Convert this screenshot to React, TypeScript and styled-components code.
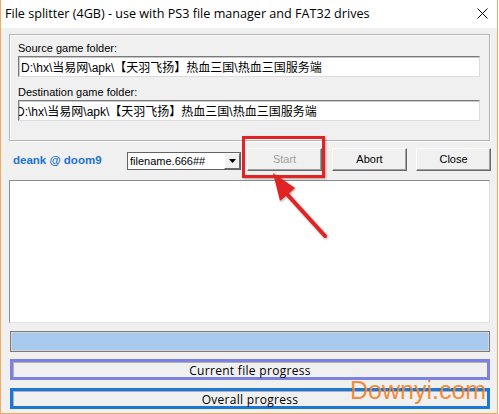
import React from "react";
import styled, { createGlobalStyle } from "styled-components";

const Global = createGlobalStyle`
  html, body { margin: 0; padding: 0; background: #ffffff; }
  body { width: 499px; height: 414px; overflow: hidden; }
`;

const Window = styled.div`
  position: relative;
  box-sizing: border-box;
  width: 498px;
  height: 414px;
  background: #f0f0f0;
  border-left: 1px solid #eeac5c;
  border-right: 1px solid #eeac5c;
  border-bottom: 1px solid #eeac5c;
  display: flex;
  flex-direction: column;
  font-family: "Liberation Sans", Arial, sans-serif;
  font-size: 11px;
  color: #000;
`;

const TitleBar = styled.div`
  height: 27px;
  background: #ffffff;
  display: flex;
  align-items: center;
  justify-content: space-between;
  padding: 0 9px 1px 4px;
  flex-shrink: 0;
`;

const TitleText = styled.span`
  font-family: "Open Sans", "Noto Sans", sans-serif;
  font-size: 12.6px;
  letter-spacing: 0px;
  color: #000;
`;

const Body = styled.div`
  display: flex;
  flex-direction: column;
  padding: 6px 7px 0 8px;
`;

const Group = styled.div`
  box-sizing: border-box;
  height: 107px;
  border: 1px solid #b4b4b4;
  box-shadow: inset 1px 1px 0 #ffffff, 1px 1px 0 #ffffff;
  padding: 6px 9px 0 8px;
  display: flex;
  flex-direction: column;
`;

const Label = styled.div<{ $gap?: number }>`
  height: 14px;
  line-height: 14px;
  margin-top: ${(p) => p.$gap ?? 0}px;
  margin-bottom: 1px;
  font-size: 11px;
`;

const TextField = styled.div`
  box-sizing: border-box;
  height: 21px;
  background: #ffffff;
  border-top: 1px solid #7a7a7a;
  border-left: 1px solid #7a7a7a;
  border-right: 1px solid #dcdcdc;
  border-bottom: 1px solid #dcdcdc;
  box-shadow: inset 1px 1px 0 #c8c8c8;
  padding: 0 2px;
  display: flex;
  align-items: center;
  overflow: hidden;
  white-space: nowrap;
  font-family: "Liberation Sans", "Noto Sans CJK SC", sans-serif;
  font-size: 12px;
`;

const FieldText = styled.span<{ $shift?: number }>`
  margin-left: ${(p) => p.$shift ?? 0}px;
`;

const Row = styled.div`
  display: flex;
  align-items: flex-start;
  height: 23px;
  margin-top: 7px;
  margin-right: -1px;
`;

const Credit = styled.div`
  width: 118px;
  box-sizing: border-box;
  padding-left: 4px;
  margin-top: 5px;
  font-weight: bold;
  font-size: 11.5px;
  color: #1c74d4;
  line-height: 14px;
`;

const Select = styled.div`
  box-sizing: border-box;
  width: 114px;
  height: 18px;
  margin-top: 4px;
  background: #fff;
  border: 1px solid #646464;
  display: flex;
  align-items: stretch;
`;

const SelectValue = styled.div`
  flex: 1;
  padding-left: 2px;
  line-height: 16px;
  font-size: 11px;
`;

const SelectArrow = styled.div`
  box-sizing: border-box;
  width: 16px;
  background: #f0f0f0;
  border-top: 1px solid #ffffff;
  border-left: 1px solid #ffffff;
  border-right: 1px solid #696969;
  border-bottom: 1px solid #696969;
  display: flex;
  align-items: center;
  justify-content: center;
`;

const Button = styled.div<{ $disabled?: boolean; $gap: number }>`
  box-sizing: border-box;
  width: 75px;
  height: 23px;
  margin-left: ${(p) => p.$gap}px;
  background: #f0f0f0;
  border-top: 1px solid #ffffff;
  border-left: 1px solid #ffffff;
  border-right: 1px solid #696969;
  border-bottom: 1px solid #696969;
  box-shadow: inset -1px -1px 0 #a0a0a0;
  display: flex;
  align-items: center;
  justify-content: center;
  font-size: 11px;
  color: ${(p) => (p.$disabled ? "#a0a0a0" : "#000")};
  padding-bottom: 1px;
`;

const LogBox = styled.div`
  box-sizing: border-box;
  height: 143px;
  margin-top: 9px;
  background: #ffffff;
  border-top: 1px solid #8c8c8c;
  border-left: 1px solid #8c8c8c;
  border-right: 1px solid #e2e2e2;
  border-bottom: 1px solid #e2e2e2;
`;

const ProgressTrack = styled.div`
  box-sizing: border-box;
  height: 21px;
  margin: 8px 0 0 1px;
  border: 1px solid #7c7c7c;
  box-shadow: inset 0 0 0 1px #d4d4d4;
  background: #a8caee;
`;

const ProgressLabel = styled.div<{ $color: string; $gap: number }>`
  box-sizing: border-box;
  height: 21px;
  margin: ${(p) => p.$gap}px 0 0 1px;
  border: 3px solid ${(p) => p.$color};
  background: #f0f0f0;
  box-shadow: inset 1px 1px 0 #b0b0b0;
  display: flex;
  align-items: center;
  justify-content: center;
  font-family: "Open Sans", "Noto Sans", sans-serif;
  font-size: 12px;
  letter-spacing: 0.3px;
  color: #000;
  padding-top: 1px;
`;

const RedBox = styled.div`
  position: absolute;
  left: 241px;
  top: 136px;
  width: 83px;
  height: 42px;
  box-sizing: border-box;
  border: 3px solid #e02424;
  box-shadow: 1px 1px 2px rgba(90, 0, 0, 0.35);
`;

const ArrowSvg = styled.svg`
  position: absolute;
  left: 262px;
  top: 168px;
  overflow: visible;
`;

const Watermark = styled.div`
  position: absolute;
  left: 349px;
  top: 376px;
  font-family: "Liberation Sans", Arial, sans-serif;
  font-size: 25px;
  color: rgba(240, 130, 40, 0.92);
  pointer-events: none;
`;

const pathText = "D:\\hx\\当易网\\apk\\【天羽飞扬】热血三国\\热血三国服务端";

export default function App() {
  return (
    <>
      <Global />
      <Window>
        <TitleBar>
          <TitleText>File splitter (4GB) - use with PS3 file manager and FAT32 drives</TitleText>
          <svg width="11" height="11" viewBox="0 0 11 11">
            <path d="M0.5 0.5 L10.5 10.5 M10.5 0.5 L0.5 10.5" stroke="#000" strokeWidth="1" fill="none" />
          </svg>
        </TitleBar>
        <Body>
          <Group>
            <Label>Source game folder:</Label>
            <TextField>
              <FieldText>{pathText}</FieldText>
            </TextField>
            <Label $gap={8}>Destination game folder:</Label>
            <TextField>
              <FieldText $shift={-5}>{pathText}</FieldText>
            </TextField>
          </Group>
          <Row>
            <Credit>deank @ doom9</Credit>
            <Select>
              <SelectValue>filename.666##</SelectValue>
              <SelectArrow>
                <svg width="7" height="4" viewBox="0 0 7 4">
                  <path d="M0 0 H7 L3.5 4 Z" fill="#000" />
                </svg>
              </SelectArrow>
            </Select>
            <Button $disabled $gap={6}>Start</Button>
            <Button $gap={10}>Abort</Button>
            <Button $gap={9}>Close</Button>
          </Row>
          <LogBox />
          <ProgressTrack />
          <ProgressLabel $color="#7c82e4" $gap={7}>Current file progress</ProgressLabel>
          <ProgressLabel $color="#1b78d8" $gap={8}>Overall progress</ProgressLabel>
        </Body>
        <RedBox />
        <ArrowSvg width="70" height="75" viewBox="0 0 70 75">
          <g filter="drop-shadow(1px 1px 1px rgba(80,0,0,0.4))">
            <path d="M62 68 L22 24" stroke="#e02424" strokeWidth="4" strokeLinecap="round" />
            <path d="M10 5 L32 20 L17 33 Z" fill="#e02424" />
          </g>
        </ArrowSvg>
        <Watermark>Downyi.com</Watermark>
      </Window>
    </>
  );
}
